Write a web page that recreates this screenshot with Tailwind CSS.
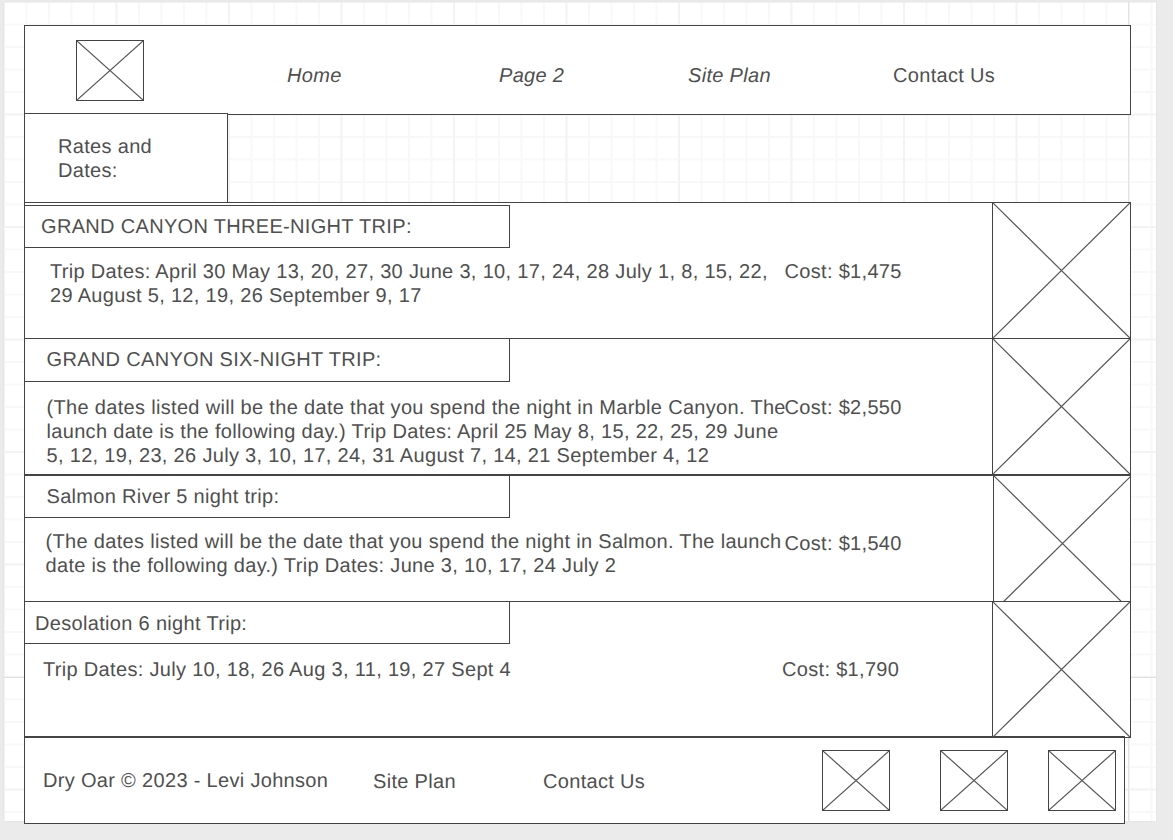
<!DOCTYPE html>
<html lang="en">
<head>
<meta charset="UTF-8">
<title>Rates and Dates wireframe</title>
<script src="https://cdn.jsdelivr.net/npm/@tailwindcss/browser@4"></script>
</head>
<body class="bg-[#ebebeb] font-['Liberation_Sans',Arial,sans-serif] text-[20px] leading-[24px] tracking-[0.32px] text-[#4f4f4f] overflow-hidden [text-rendering:geometricPrecision]">
<div class="h-[840px] w-[1173px] pl-[4px] pt-[2px]">
  <!-- canvas with grid -->
  <div class="h-[819px] w-[1152px] bg-white pl-[20px] pt-[23px] shadow-[0_0_2px_#dddddd] bg-[linear-gradient(to_right,transparent_1124px,#e2e2e2_1124px,#e2e2e2_1125px,transparent_1125px),linear-gradient(to_bottom,transparent_675px,#e2e2e2_675px,#e2e2e2_676px,transparent_676px),linear-gradient(to_right,#f3f3f3_2px,transparent_2px),linear-gradient(to_bottom,#f3f3f3_2px,transparent_2px),linear-gradient(to_right,#f8f8f8_2px,transparent_2px),linear-gradient(to_bottom,#f8f8f8_2px,transparent_2px)] bg-[size:100%_100%,100%_100%,112.5px_112.5px,112.5px_112.5px,22.5px_22.5px,22.5px_22.5px] bg-position-[0_0,0_0,-1px_-1px,-1px_-1px,-1px_-1px,-1px_-1px]">

    <!-- header -->
    <div class="flex h-[90px] w-[1107px] items-center border border-[#444444] bg-white">
      <svg class="ml-[51px] h-[61px] w-[68px] border border-[#444444]" viewBox="0 0 100 100" preserveAspectRatio="none"><path d="M0 0L100 100M100 0L0 100" stroke="#555555" stroke-width="1.2" fill="none" vector-effect="non-scaling-stroke"/></svg>
      <a class="ml-[143px] mt-[12px] w-[212px] italic">Home</a>
      <a class="mt-[12px] w-[189px] italic">Page 2</a>
      <a class="mt-[12px] w-[205px] italic">Site Plan</a>
      <a class="mt-[12px]">Contact Us</a>
    </div>

    <!-- page title -->
    <div class="-mt-[2px] h-[90px] w-[204px] border border-[#444444] bg-white pl-[33px] pt-[21px]">Rates and<br>Dates:</div>

    <!-- trip 1 -->
    <div class="-mt-px flex h-[137px] w-[1107px] border border-[#444444] bg-white">
      <div class="w-[968px]">
        <div class="mt-[2px] h-[43px] w-[485px] border-y border-r border-[#444444] pl-[16px] pt-[9px]">GRAND CANYON THREE-NIGHT TRIP:</div>
        <div class="mt-[12px] flex">
          <p class="ml-[25px] w-[734.5px]">Trip Dates: April 30 May 13, 20, 27, 30 June 3, 10, 17, 24, 28 July 1, 8, 15, 22, 29 August 5, 12, 19, 26 September 9, 17</p>
          <p>Cost: $1,475</p>
        </div>
      </div>
      <svg class="h-[135px] w-[138px] border-l border-[#444444]" viewBox="0 0 100 100" preserveAspectRatio="none"><path d="M0 0L100 100M100 0L0 100" stroke="#555555" stroke-width="1.2" fill="none" vector-effect="non-scaling-stroke"/></svg>
    </div>

    <!-- trip 2 -->
    <div class="-mt-px flex h-[138px] w-[1107px] border border-b-2 border-[#444444] bg-white">
      <div class="w-[968px]">
        <div class="h-[43px] w-[485px] border-b border-r border-[#444444] pl-[21.5px] pt-[9px]">GRAND CANYON SIX-NIGHT TRIP:</div>
        <div class="mt-[14px] flex">
          <p class="ml-[21.5px] w-[738px] whitespace-nowrap">(The dates listed will be the date that you spend the night in Marble Canyon. The<br>launch date is the following day.) Trip Dates: April 25 May 8, 15, 22, 25, 29 June<br>5, 12, 19, 23, 26 July 3, 10, 17, 24, 31 August 7, 14, 21 September 4, 12</p>
          <p>Cost: $2,550</p>
        </div>
      </div>
      <svg class="h-[135px] w-[138px] border-l border-[#444444]" viewBox="0 0 100 100" preserveAspectRatio="none"><path d="M0 0L100 100M100 0L0 100" stroke="#555555" stroke-width="1.2" fill="none" vector-effect="non-scaling-stroke"/></svg>
    </div>

    <!-- trip 3 -->
    <div class="-mt-px flex h-[127px] w-[1107px] overflow-hidden border border-[#444444] bg-white">
      <div class="w-[968px] shrink-0">
        <div class="h-[42px] w-[485px] border-b border-r border-[#444444] pl-[21.5px] pt-[9px]">Salmon River 5 night trip:</div>
        <div class="mt-[12px] flex">
          <p class="ml-[20.5px] w-[739px]">(The dates listed will be the date that you spend the night in Salmon. The launch date is the following day.) Trip Dates: June 3, 10, 17, 24 July 2</p>
          <p class="mt-[2px]">Cost: $1,540</p>
        </div>
      </div>
      <svg class="h-[135px] w-[138px] shrink-0 border-l border-[#444444]" viewBox="0 0 100 100" preserveAspectRatio="none"><path d="M0 0L100 100M100 0L0 100" stroke="#555555" stroke-width="1.2" fill="none" vector-effect="non-scaling-stroke"/></svg>
    </div>

    <!-- trip 4 -->
    <div class="-mt-px flex h-[137px] w-[1107px] border border-[#444444] bg-white">
      <div class="w-[968px]">
        <div class="h-[42px] w-[485px] border-b border-r border-[#444444] pl-[10px] pt-[10px]">Desolation 6 night Trip:</div>
        <div class="mt-[14px] flex">
          <p class="ml-[18px] w-[739px]">Trip Dates: July 10, 18, 26 Aug 3, 11, 19, 27 Sept 4</p>
          <p>Cost: $1,790</p>
        </div>
      </div>
      <svg class="h-[135px] w-[138px] border-l border-[#444444]" viewBox="0 0 100 100" preserveAspectRatio="none"><path d="M0 0L100 100M100 0L0 100" stroke="#555555" stroke-width="1.2" fill="none" vector-effect="non-scaling-stroke"/></svg>
    </div>

    <!-- footer -->
    <div class="-mt-[2px] flex h-[88px] w-[1101px] items-center border border-t-2 border-[#444444] bg-white pl-[18px]">
      <span class="w-[330px]">Dry Oar © 2023 - Levi Johnson</span>
      <span class="mt-[2px] w-[170px]">Site Plan</span>
      <span class="mt-[2px] w-[279px]">Contact Us</span>
      <svg class="h-[61px] w-[68px] border border-[#444444]" viewBox="0 0 100 100" preserveAspectRatio="none"><path d="M0 0L100 100M100 0L0 100" stroke="#555555" stroke-width="1.2" fill="none" vector-effect="non-scaling-stroke"/></svg>
      <svg class="ml-[50px] h-[61px] w-[68px] border border-[#444444]" viewBox="0 0 100 100" preserveAspectRatio="none"><path d="M0 0L100 100M100 0L0 100" stroke="#555555" stroke-width="1.2" fill="none" vector-effect="non-scaling-stroke"/></svg>
      <svg class="ml-[40px] h-[61px] w-[68px] border border-[#444444]" viewBox="0 0 100 100" preserveAspectRatio="none"><path d="M0 0L100 100M100 0L0 100" stroke="#555555" stroke-width="1.2" fill="none" vector-effect="non-scaling-stroke"/></svg>
    </div>
  </div>
</div>
</body>
</html>
